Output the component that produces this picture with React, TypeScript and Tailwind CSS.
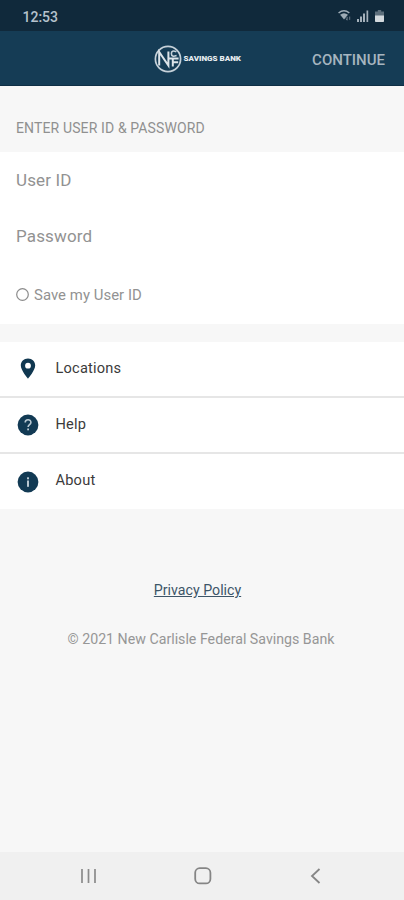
import type { ReactNode } from "react";

const StatusBar = () => (
  <div className="flex h-[31px] shrink-0 items-center justify-between bg-[#10293b] pl-[22.5px] pr-[20px]">
    <span className="pt-[2px] text-[14px] font-medium leading-none text-[#b5c2cd]">12:53</span>
    <div className="flex items-end gap-[6px]">
      <svg width="13" height="13" viewBox="0 0 14 13" fill="none">
        <path d="M0.6 3.8Q6.5-1 12.2 3.8" stroke="#9eabb5" strokeWidth="1.7" />
        <path d="M2.3 5.6Q6.5 2.3 10.7 5.6L6.5 10.8Z" fill="#9eabb5" />
        <path d="M9.8 11.5V8M8.6 9.8l1.2 1.8M12.6 7.6v3.6" stroke="#71818e" strokeWidth="1" />
      </svg>
      <svg width="12" height="12" viewBox="0 0 12 12" fill="#a4b0ba">
        <rect x="0" y="9" width="2" height="3" />
        <rect x="3" y="6.5" width="2" height="5.5" />
        <rect x="6" y="3.5" width="2" height="8.5" />
        <rect x="9.5" y="0.5" width="1.7" height="11.5" />
      </svg>
      <svg width="9" height="12" viewBox="0 0 9 12">
        <path d="M2.8 0h3.4v1.4H9V6H0V1.4h2.8z" fill="#5d6f7c" />
        <path d="M0 5.5h9v5.7q0 .8-.8.8H.8Q0 12 0 11.2z" fill="#d3d9dd" />
      </svg>
    </div>
  </div>
);

const Logo = () => (
  <svg width="88" height="28" viewBox="0 0 88 28" className="font-['Roboto',sans-serif]">
    <circle cx="14" cy="14" r="12.6" fill="none" stroke="#c6d1d9" strokeWidth="1.7" />
    {/* Monogram: wide N with a small C stacked over an F */}
    <path d="M5.2 20.5V7L14.4 20.5V6.5" fill="none" stroke="#dce4e9" strokeWidth="2" />
    <path d="M22.4 6.8Q17.4 4.6 17.4 8.6T22.6 10.6" fill="none" stroke="#c6d1d9" strokeWidth="1.6" />
    <path d="M15 13.6h9.6M18.8 13.6v8M18.8 17.3h5.4" fill="none" stroke="#dce4e9" strokeWidth="2" />
    <text x="29.5" y="16.3" fontSize="6.8" fontWeight="900" fill="#e6ecf0" textLength="57.5" lengthAdjust="spacingAndGlyphs">
      SAVINGS BANK
    </text>
  </svg>
);

const Header = () => (
  <header className="grid h-[55px] shrink-0 grid-cols-[1fr_88px_1fr] items-center border-b border-[#0f2f45] bg-[#153c55] pl-[10px] pr-[19px] pt-[2px]">
    <span />
    <Logo />
    <button className="justify-self-end pt-[3px] text-[15px] font-medium leading-none text-[#a6b5bf]">CONTINUE</button>
  </header>
);

const PinIcon = () => (
  <svg width="22" height="22" viewBox="0 0 22 22">
    <path
      fillRule="evenodd"
      d="M11 .6C6.8.6 3.8 3.7 3.8 7.6 3.8 12.4 11 20.8 11 20.8s7.2-8.4 7.2-13.2C18.2 3.7 15.2.6 11 .6zm0 4.2a2.9 2.9 0 1 1 0 5.8 2.9 2.9 0 0 1 0-5.8z"
      fill="#103750"
    />
  </svg>
);

const HelpIcon = () => (
  <svg width="22" height="22" viewBox="0 0 22 22" fill="none">
    <circle cx="11" cy="11" r="10.4" fill="#123a54" />
    <path d="M8.2 8.6c0-3.7 5.7-3.7 5.7-.2 0 2.2-2.8 2.4-2.8 4.7" stroke="#b9c8d2" strokeWidth="1.6" />
    <rect x="10.2" y="14.5" width="1.8" height="1.8" fill="#b9c8d2" />
  </svg>
);

const InfoIcon = () => (
  <svg width="22" height="22" viewBox="0 0 22 22">
    <circle cx="11" cy="11" r="10.4" fill="#123a54" />
    <rect x="10" y="6.3" width="2" height="2" fill="#b9c8d2" />
    <rect x="10" y="9.5" width="2" height="6.3" fill="#b9c8d2" />
  </svg>
);

const MenuRow = ({ icon, label }: { icon: ReactNode; label: string }) => (
  <a className="flex h-14 items-center gap-[16.5px] border-b-2 border-[#e6e6e6] pl-[17px] text-[14.6px] leading-none tracking-[0.2px] text-[#3b3b3b] last:h-[55px] last:border-b-0">
    {icon}
    <span className="pb-[2px]">{label}</span>
  </a>
);

const NavBar = () => (
  <nav className="flex h-12 shrink-0 items-center justify-between bg-[#f0f0f0] pl-[81px] pr-[83px]">
    <svg width="15" height="16" viewBox="0 0 15 16" stroke="#8b8b8b" strokeWidth="1.7">
      <path d="M1 1v14M7.5 1v14M14 1v14" />
    </svg>
    <svg width="18" height="18" viewBox="0 0 18 18" fill="none" stroke="#858585" strokeWidth="1.8">
      <rect x="1.2" y="1.2" width="15.2" height="15.2" rx="4.5" />
    </svg>
    <svg width="12" height="16" viewBox="0 0 12 16" fill="none" stroke="#858585" strokeWidth="1.8">
      <path d="M10.5 1L3 8l7.5 7" />
    </svg>
  </nav>
);

const App = () => {
  return (
    <div className="flex h-[900px] w-[404px] flex-col overflow-hidden bg-[#f7f7f7] font-['Roboto',sans-serif]">
      <StatusBar />
      <Header />

      <main className="flex flex-1 flex-col">
        <h2 className="flex h-[66px] items-center pl-4 pt-[18px] text-[14px] leading-none tracking-[0.13px] text-[#909090]">
          ENTER USER ID &amp; PASSWORD
        </h2>

        <section className="flex h-[172px] flex-col bg-white pl-4 text-[#929292]">
          <div className="flex h-[56px] items-center text-[17px] leading-none tracking-[0.15px]">User ID</div>
          <div className="flex h-[57px] items-center text-[17px] leading-none tracking-[0.15px]">Password</div>
          <label className="flex h-[59px] items-center gap-[5px] pt-[2px] text-[14.9px] leading-none tracking-[0.05px]">
            <svg width="13" height="13" viewBox="0 0 13 13" fill="none" className="mb-[2px]">
              <circle cx="6.5" cy="6.5" r="5.8" stroke="#8b8b8b" strokeWidth="1.2" />
            </svg>
            Save my User ID
          </label>
        </section>

        <section className="mt-[18px] bg-white">
          <MenuRow icon={<PinIcon />} label="Locations" />
          <MenuRow icon={<HelpIcon />} label="Help" />
          <MenuRow icon={<InfoIcon />} label="About" />
        </section>

        <footer className="flex flex-col items-center pr-[2px] pt-[74px] text-[14.2px]">
          <a className="mr-[7px] leading-[14px] text-[#3d5568] underline">Privacy Policy</a>
          <p className="mt-[35px] leading-[14px] text-[#969696]">© 2021 New Carlisle Federal Savings Bank</p>
        </footer>
      </main>

      <NavBar />
    </div>
  );
};

export default App;
